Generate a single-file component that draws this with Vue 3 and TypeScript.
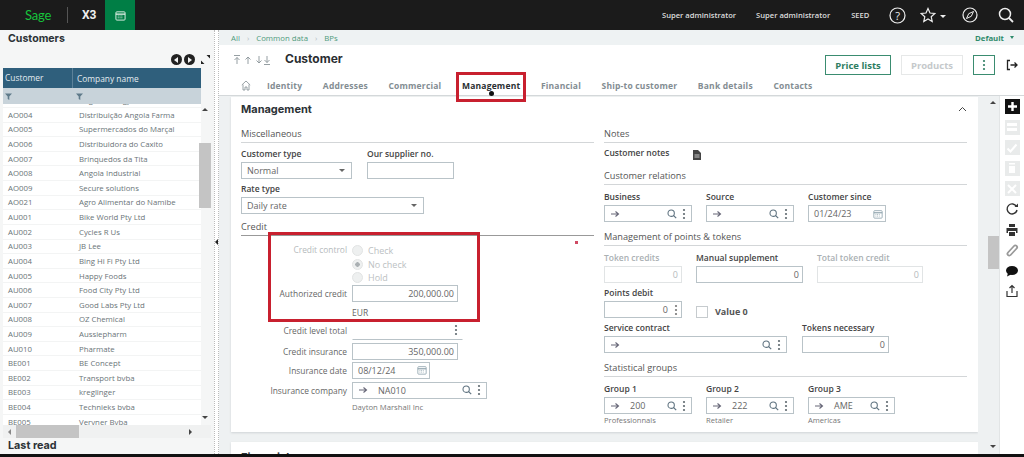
<script setup lang="ts">
const customers: [string, string][] = [
  ['AO003', 'Angola Energy'],
  ['AO004', 'Distribuição Angola Farma'],
  ['AO005', 'Supermercados do Marçal'],
  ['AO006', 'Distribuidora do Caxito'],
  ['AO007', 'Brinquedos da Tita'],
  ['AO008', 'Angola Industrial'],
  ['AO009', 'Secure solutions'],
  ['AO021', 'Agro Alimentar do Namibe'],
  ['AU001', 'Bike World Pty Ltd'],
  ['AU002', 'Cycles R Us'],
  ['AU003', 'JB Lee'],
  ['AU004', 'Bing Hi Fi Pty Ltd'],
  ['AU005', 'Happy Foods'],
  ['AU006', 'Food City Pty Ltd'],
  ['AU007', 'Good Labs Pty Ltd'],
  ['AU008', 'OZ Chemical'],
  ['AU009', 'Aussiepharm'],
  ['AU010', 'Pharmate'],
  ['BE001', 'BE Concept'],
  ['BE002', 'Transport bvba'],
  ['BE003', 'kreglinger'],
  ['BE004', 'Technieks bvba'],
  ['BE005', 'Vervner Bvba'],
]

const tabs = ['Identity', 'Addresses', 'Commercial', 'Management', 'Financial', 'Ship-to customer', 'Bank details', 'Contacts']

const groups = [
  { label: 'Group 1', value: '200', sub: 'Professionnals', width: 88 },
  { label: 'Group 2', value: '222', sub: 'Retailer', width: 88 },
  { label: 'Group 3', value: 'AME', sub: 'Americas', width: 87 },
]

const disabledTools = ['i-save', 'i-check', 'i-trash', 'i-close']
const activeTools = ['i-reload', 'i-print', 'i-clip', 'i-bubble', 'i-upload']
</script>

<template>
  <div class="page">
    <svg class="defs" width="0" height="0" aria-hidden="true">
      <symbol id="i-search" viewBox="0 0 12 12"><circle cx="5" cy="5" r="3.8" fill="none" stroke="currentColor" stroke-width="1.3" /><path d="M8 8l3 3" stroke="currentColor" stroke-width="1.5" /></symbol>
      <symbol id="i-arrow" viewBox="0 0 10 10"><path d="M1 5h7M5.5 2.5L8.5 5l-3 2.5" fill="none" stroke="currentColor" stroke-width="1.1" /></symbol>
      <symbol id="i-dots" viewBox="0 0 4 12"><circle cx="2" cy="2" r="1.1" fill="currentColor" /><circle cx="2" cy="6" r="1.1" fill="currentColor" /><circle cx="2" cy="10" r="1.1" fill="currentColor" /></symbol>
      <symbol id="i-cal" viewBox="0 0 12 12"><rect x="1" y="2" width="10" height="9" rx="1" fill="none" stroke="currentColor" /><path d="M1 4.5h10" stroke="currentColor" stroke-width="1.4" /><path d="M3 6.5h6M3 8.5h6" stroke="currentColor" stroke-dasharray="1 1" /></symbol>
      <symbol id="i-save" viewBox="0 0 14 14"><path d="M2 3h10v3H2zM2 8h10v3H2z" fill="#fff" /></symbol>
      <symbol id="i-check" viewBox="0 0 14 14"><path d="M2.5 7.5l3 3 6-7" fill="none" stroke="#fff" stroke-width="2" /></symbol>
      <symbol id="i-trash" viewBox="0 0 14 14"><path d="M4 2h6v1.5H4zM4 5h6v7H4z" fill="#fff" /></symbol>
      <symbol id="i-close" viewBox="0 0 14 14"><path d="M3 3l8 8M11 3l-8 8" stroke="#fff" stroke-width="2" /></symbol>
      <symbol id="i-reload" viewBox="0 0 14 14"><path d="M11.5 4.5A5 5 0 1 0 12 8" fill="none" stroke="#333" stroke-width="1.4" /><path d="M9.5 5h3.5V1.5z" fill="#333" /></symbol>
      <symbol id="i-print" viewBox="0 0 14 14"><path d="M4 1h6v3H4zM1.5 5h11v5H11V8H3v2H1.5zM4 9h6v4H4z" fill="#333" /></symbol>
      <symbol id="i-clip" viewBox="0 0 14 14"><path d="M3 9.5l6-6.500a1.800 1.800 0 0 1 2.600 2.500l-6 6.500a1.800 1.800 0 0 1-2.600-2.500z" fill="none" stroke="#999" stroke-width="1.800" /></symbol>
      <symbol id="i-bubble" viewBox="0 0 14 14"><ellipse cx="7" cy="6.500" rx="6" ry="4.500" fill="#111" /><path d="M3 9l-1 3.500 4-2z" fill="#111" /></symbol>
      <symbol id="i-upload" viewBox="0 0 14 14"><path d="M2 7v5.500h10V7M7 9V1.500M4.500 4L7 1.500 9.500 4" fill="none" stroke="#333" stroke-width="1.200" /></symbol>
    </svg>

    <header class="topbar">
      <span class="logo">Sage</span>
      <span class="logo-sep"></span>
      <span class="product">X3</span>
      <span class="cal-tab"><svg width="11" height="11"><use href="#i-cal" /></svg></span>
      <span class="top-user first">Super administrator</span>
      <span class="top-user second">Super administrator</span>
      <span class="top-user third">SEED</span>
      <svg class="top-icon help" width="17" height="17" viewBox="0 0 17 17"><circle cx="8.500" cy="8.500" r="7.500" fill="none" stroke="#eee" stroke-width="1.200" /><text x="8.500" y="12.500" text-anchor="middle" class="help-mark">?</text></svg>
      <svg class="top-icon star" width="16" height="16" viewBox="0 0 16 16"><path d="M8 1.500l2 4.500 4.800.5-3.600 3.200 1 4.800L8 12l-4.200 2.500 1-4.800L1.200 6.500 6 6z" fill="none" stroke="#eee" stroke-width="1.200" /></svg>
      <span class="star-caret"></span>
      <svg class="top-icon compass" width="16" height="16" viewBox="0 0 16 16"><circle cx="8" cy="8" r="7" fill="none" stroke="#eee" stroke-width="1.200" /><path d="M11.500 4.500L9.300 9.300 4.500 11.500 6.700 6.700z" fill="none" stroke="#eee" /></svg>
      <svg class="top-icon search" width="16" height="16" viewBox="0 0 16 16"><circle cx="7" cy="7" r="5.500" fill="none" stroke="#eee" stroke-width="1.500" /><path d="M11 11l4 4" stroke="#eee" stroke-width="1.800" /></svg>
    </header>

    <div class="body">
      <aside class="sidebar">
        <h2 class="side-title">Customers</h2>
        <div class="side-nav">
          <span class="round-btn"><i class="tri left"></i></span>
          <span class="round-btn"><i class="tri right"></i></span>
          <svg width="11" height="11" viewBox="0 0 11 11" class="expand"><path d="M6.500 1H10v3.500zM1 6.500V10h3.500z" fill="#222" /></svg>
        </div>
        <div class="grid-wrap">
          <div class="grid">
            <div class="grid-head"><span class="c1">Customer</span><span class="c2">Company name</span></div>
            <div class="grid-filter">
              <span class="c1"><svg width="7" height="7" viewBox="0 0 7 7"><path d="M0 .5h7L4.300 3.500V7L2.700 6V3.500z" fill="#5f7a8a" /></svg></span>
              <span class="c2"><svg width="7" height="7" viewBox="0 0 7 7"><path d="M0 .5h7L4.300 3.500V7L2.700 6V3.500z" fill="#5f7a8a" /></svg></span>
            </div>
            <div class="grid-rows">
              <div v-for="c in customers" :key="c[0]" class="grid-row"><span class="c1">{{ c[0] }}</span><span class="c2">{{ c[1] }}</span></div>
            </div>
          </div>
          <div class="vscroll">
            <i class="tri up"></i>
            <span class="vthumb"></span>
            <i class="tri down"></i>
          </div>
        </div>
        <div class="hscroll">
          <i class="tri sleft"></i>
          <span class="hthumb"></span>
          <i class="tri sright"></i>
        </div>
        <div class="last-read">Last read</div>
      </aside>

      <div class="splitter"><i class="tri split-arrow"></i></div>

      <main class="main">
        <nav class="crumbs">
          <span>All</span><b>›</b><span>Common data</span><b>›</b><span>BPs</span>
          <span class="view">Default <i class="tri view-caret"></i></span>
        </nav>

        <div class="record-head">
          <div class="title-row">
            <svg class="rec-arrows" width="38" height="10" viewBox="0 0 38 10">
              <g fill="none" stroke="#8a9499" stroke-width=".9">
                <path d="M1 .5h6M4 9V2.500M1.500 5L4 2.500 6.500 5" />
                <path d="M15 9V2M12.500 4.500L15 2l2.500 2.500" />
                <path d="M26 1v7M23.500 5.500L26 8l2.500-2.500" />
                <path d="M34 1v6.500M31.500 5L34 7.500 36.500 5M31 9.500h6" />
              </g>
            </svg>
            <h1 class="rec-title">Customer</h1>
            <div class="rec-actions">
              <button class="btn primary">Price lists</button>
              <button class="btn off">Products</button>
              <button class="btn more"><svg width="4" height="12"><use href="#i-dots" /></svg></button>
              <svg class="exit" width="12" height="12" viewBox="0 0 12 12"><path d="M4 1.500H1.500v9H4M4.500 6H11M8.500 3.500L11 6 8.500 8.500" fill="none" stroke="#222" stroke-width="1.300" /></svg>
            </div>
          </div>
          <div class="tabs">
            <svg class="home" width="10" height="11" viewBox="0 0 10 11"><path d="M.8 5L5 1l4.200 4M2 4.500V10h2V7h2v3h2V4.500" fill="none" stroke="#7f8a8f" stroke-width=".8" /></svg>
            <span v-for="t in tabs" :key="t" class="tab" :class="{ active: t === 'Management' }">{{ t }}</span>
          </div>
          <span class="callout tab-callout"></span>
        </div>

        <div class="content-row">
          <div class="content">
            <section class="card">
              <div class="card-head">
                <h2>Management</h2>
                <svg width="9" height="6" viewBox="0 0 9 6"><path d="M1 5l3.500-3.500L8 5" fill="none" stroke="#444" /></svg>
              </div>
              <div class="columns">
                <div class="col left-col">
                  <h3 class="sec first-sec">Miscellaneous</h3>
                  <div class="row">
                    <div class="f">
                      <label>Customer type</label>
                      <div class="inp w111">Normal<i class="tri sel"></i></div>
                    </div>
                    <div class="f">
                      <label>Our supplier no.</label>
                      <div class="inp w87"></div>
                    </div>
                  </div>
                  <div class="f">
                    <label>Rate type</label>
                    <div class="inp w183">Daily rate<i class="tri sel"></i></div>
                  </div>
                  <h3 class="sec dark">Credit</h3>
                  <div class="credit">
                    <div class="cr radios">
                      <span class="cl dim">Credit control</span>
                      <div class="radio-list">
                        <span class="radio"><i></i>Check</span>
                        <span class="radio on"><i></i>No check</span>
                        <span class="radio"><i></i>Hold</span>
                      </div>
                    </div>
                    <div class="cr">
                      <span class="cl">Authorized credit</span>
                      <div class="inp w106 num">200,000.00</div>
                    </div>
                    <div class="cr unit"><span class="cl"></span><span>EUR</span></div>
                    <div class="cr total">
                      <span class="cl">Credit level total</span>
                      <div class="inp w111 flat-top"><svg class="dots" width="4" height="12"><use href="#i-dots" /></svg></div>
                    </div>
                    <div class="cr">
                      <span class="cl">Credit insurance</span>
                      <div class="inp w106 num">350,000.00</div>
                    </div>
                    <div class="cr gap3">
                      <span class="cl">Insurance date</span>
                      <div class="inp w78">08/12/24<svg class="cal" width="10" height="10"><use href="#i-cal" /></svg></div>
                    </div>
                    <div class="cr">
                      <span class="cl">Insurance company</span>
                      <div class="inp w135 look">
                        <svg class="arrow" width="10" height="10"><use href="#i-arrow" /></svg><span class="lv">NA010</span>
                        <svg class="mag" width="10" height="10"><use href="#i-search" /></svg><svg class="dots" width="4" height="12"><use href="#i-dots" /></svg>
                      </div>
                    </div>
                    <div class="cr"><span class="cl"></span><span class="sub">Dayton Marshall Inc</span></div>
                  </div>
                  <span class="red-dot"></span>
                  <span class="callout credit-callout"></span>
                </div>

                <div class="col">
                  <h3 class="sec first-sec">Notes</h3>
                  <div class="notes">
                    <label>Customer notes</label>
                    <svg width="8" height="10" viewBox="0 0 8 10"><path d="M0 0h5l3 3v7H0z" fill="#444" /><path d="M1.500 5h5M1.500 7h5" stroke="#fff" stroke-width=".7" /></svg>
                  </div>
                  <h3 class="sec">Customer relations</h3>
                  <div class="row g14">
                    <div class="f"><label>Business</label>
                      <div class="inp w88 look"><svg class="arrow" width="10" height="10"><use href="#i-arrow" /></svg>
                        <svg class="mag" width="10" height="10"><use href="#i-search" /></svg><svg class="dots" width="4" height="12"><use href="#i-dots" /></svg></div></div>
                    <div class="f"><label>Source</label>
                      <div class="inp w88 look"><svg class="arrow" width="10" height="10"><use href="#i-arrow" /></svg>
                        <svg class="mag" width="10" height="10"><use href="#i-search" /></svg><svg class="dots" width="4" height="12"><use href="#i-dots" /></svg></div></div>
                    <div class="f"><label>Customer since</label>
                      <div class="inp w78">01/24/23<svg class="cal" width="10" height="10"><use href="#i-cal" /></svg></div></div>
                  </div>
                  <h3 class="sec">Management of points &amp; tokens</h3>
                  <div class="row g14">
                    <div class="f"><label class="dim">Token credits</label><div class="inp w78 num off">0</div></div>
                    <div class="f"><label>Manual supplement</label><div class="inp w107 num">0</div></div>
                    <div class="f"><label class="dim">Total token credit</label><div class="inp w106 num off">0</div></div>
                  </div>
                  <div class="row g14">
                    <div class="f"><label>Points debit</label>
                      <div class="inp w78 num with-dots">0<svg class="dots" width="4" height="12"><use href="#i-dots" /></svg></div></div>
                    <div class="check"><i></i>Value 0</div>
                  </div>
                  <div class="row g15">
                    <div class="f"><label>Service contract</label>
                      <div class="inp w183 look"><svg class="arrow" width="10" height="10"><use href="#i-arrow" /></svg>
                        <svg class="mag" width="10" height="10"><use href="#i-search" /></svg><svg class="dots" width="4" height="12"><use href="#i-dots" /></svg></div></div>
                    <div class="f"><label>Tokens necessary</label><div class="inp w87 num">0</div></div>
                  </div>
                  <h3 class="sec">Statistical groups</h3>
                  <div class="row g14">
                    <div v-for="g in groups" :key="g.label" class="f">
                      <label>{{ g.label }}</label>
                      <div class="inp look" :style="{ width: g.width + 'px' }">
                        <svg class="arrow" width="10" height="10"><use href="#i-arrow" /></svg><span class="lv">{{ g.value }}</span>
                        <svg class="mag" width="10" height="10"><use href="#i-search" /></svg><svg class="dots" width="4" height="12"><use href="#i-dots" /></svg>
                      </div>
                      <span class="sub group-sub">{{ g.sub }}</span>
                    </div>
                  </div>
                </div>
              </div>
            </section>
            <section class="card next"><h2>Financial</h2></section>
          </div>
          <div class="main-scroll">
            <i class="tri up"></i>
            <span class="main-thumb"></span>
            <i class="tri down"></i>
          </div>
          <div class="toolbar">
            <span class="tool plus"><svg width="11" height="11" viewBox="0 0 11 11"><path d="M5.500 1v9M1 5.500h9" stroke="#fff" stroke-width="2.400" /></svg></span>
            <span v-for="t in disabledTools" :key="t" class="tool dis"><svg width="14" height="14"><use :href="'#' + t" /></svg></span>
            <span v-for="t in activeTools" :key="t" class="tool"><svg width="14" height="14"><use :href="'#' + t" /></svg></span>
          </div>
        </div>
      </main>
    </div>
    <div class="bottom"></div>
  </div>
</template>

<style>
html, body { margin: 0; background: #fff; }
</style>

<style scoped>
.page {
  width: 1024px;
  height: 457px;
  overflow: hidden;
  display: flex;
  flex-direction: column;
  font-family: "Open Sans", sans-serif;
  color: #555;
  font-size: 9.5px;
}
.defs { position: absolute; }
.bottom { height: 3px; background: #111; flex: none; }
.tri { display: block; width: 0; height: 0; border: 3px solid transparent; }

.topbar {
  height: 30px;
  flex: none;
  background: #1b1b1b;
  display: flex;
  align-items: center;
  color: #eee;
}
.logo { margin-left: 25px; width: 27px; color: #16c43c; font: 400 13px "Lato", sans-serif; letter-spacing: -.2px; }
.logo-sep { width: 1px; height: 16px; background: #555; margin-left: 15px; }
.product { margin-left: 14px; width: 15px; font: 700 12px "Roboto", sans-serif; }
.cal-tab { margin-left: 8px; width: 30px; height: 30px; background: #007e45; display: flex; align-items: center; justify-content: center; color: #e8f4ec; }
.top-user { font-size: 7.6px; font-weight: 600; color: #ddd; white-space: nowrap; }
.top-user.first { margin-left: 527px; }
.top-user.second { margin-left: 20px; }
.top-user.third { margin-left: 21px; }
.help-mark { font: 400 11px "Open Sans", sans-serif; fill: #eee; }
.top-icon { flex: none; }
.help { margin-left: 20px; }
.star { margin-left: 14px; }
.star-caret { width: 0; height: 0; border: 3px solid transparent; border-top-color: #eee; margin: 6px 0 0 4px; }
.compass { margin-left: 16px; }
.search { margin-left: 20px; }

.body { flex: 1; min-height: 0; display: flex; }

.sidebar { width: 214px; flex: none; background: #f5f6f6; display: flex; flex-direction: column; }
.side-title { margin: 0; padding: 2px 0 0 8px; height: 14px; font: 700 10.600px/14px "Inter", sans-serif; color: #2c3236; }
.side-nav { height: 22px; display: flex; align-items: center; gap: 2px; padding: 5px 0 0 171px; box-sizing: border-box; }
.round-btn { width: 11px; height: 11px; flex: none; border-radius: 50%; background: #222; display: flex; align-items: center; }
.tri.left { border-right: 4px solid #f5f6f6; border-left: 0; margin-left: 3px; }
.tri.right { border-left: 4px solid #f5f6f6; border-right: 0; margin-left: 4px; }
.expand { margin-left: 3px; flex: none; }
.grid-wrap { height: 357px; margin-left: 3px; display: flex; }
.grid { width: 198px; flex: none; display: flex; flex-direction: column; background: #fff; }
.grid-head { height: 20px; background: #2f5f7c; color: #e4ecf0; font-size: 8.400px; display: flex; align-items: center; }
.grid-head .c1 { border-right: 1px solid #5b8199; height: 20px; line-height: 20px; }
.grid-filter { height: 16px; background: #c8d3da; display: flex; align-items: center; }
.grid-filter svg { display: block; }
.c1 { width: 67px; flex: none; padding-left: 2px; box-sizing: content-box; }
.c2 { padding-left: 4px; }
.grid-rows { flex: 1; min-height: 0; overflow: hidden; }
.grid-row { height: 14.620px; box-sizing: border-box; border-bottom: 1px solid #f3f4f4; display: flex; align-items: center; font-size: 7.800px; color: #6a7478; }
.grid-row:first-child { margin-top: -10.600px; }
.grid-row .c1 { width: 71px; padding-left: 5px; }
.grid-row .c2 { padding-left: 0; }
.vscroll { width: 12px; flex: none; display: flex; flex-direction: column; align-items: center; margin-left: -2px; padding-top: 40px; box-sizing: border-box; }
.tri.up { border-bottom: 3px solid #444; border-top: 0; }
.tri.down { border-top: 3px solid #444; border-bottom: 0; }
.vscroll .vthumb { width: 12px; height: 65px; background: #c4c4c4; margin-top: 32px; }
.vscroll .down { margin-top: auto; margin-bottom: 6px; }
.hscroll { height: 13px; margin-left: 3px; width: 208px; background: #f0f1f1; display: flex; align-items: center; }
.tri.sleft { border-right: 3px solid #888; border-left: 0; margin-left: 5px; }
.hthumb { width: 63px; height: 13px; background: #c4c4c4; margin-left: 5px; }
.tri.sright { border-left: 3px solid #444; border-right: 0; margin-left: 110px; }
.last-read { padding-left: 8px; font: 700 10.800px/14px "Inter", sans-serif; color: #2c3236; margin-top: 1px; }

.splitter { width: 3px; flex: none; background: #fff; border-left: 1px dotted #bbb; border-right: 1px dotted #bbb; display: flex; align-items: center; }
.split-arrow { border-right: 3px solid #222; border-left: 0; }

.main { flex: 1; min-width: 0; display: flex; flex-direction: column; }
.crumbs { height: 15px; flex: none; background: #eef2f3; display: flex; align-items: center; gap: 7px; padding: 0 10px 0 12px; color: #4f9a7c; font-size: 7.800px; }
.crumbs b { color: #b5bfc3; font-weight: 400; }
.view { margin-left: auto; font-weight: 700; color: #2e8b6b; display: flex; align-items: center; gap: 6px; }
.tri.view-caret { border-top: 3px solid #2e8b6b; border-bottom: 0; border-width: 3px 2px 0; }

.record-head { height: 51px; flex: none; position: relative; background: #fff; border-bottom: 1px solid #d4d8da; box-sizing: border-box; }
.title-row { display: flex; align-items: center; height: 30px; padding-left: 14px; box-sizing: border-box; }
.rec-arrows { flex: none; margin-bottom: 1px; }
.rec-title { margin: 0 0 4px 14px; font: 700 12px "Inter", sans-serif; color: #2a2e31; }
.rec-actions { margin-left: auto; display: flex; align-items: center; padding-top: 10px; }
.btn { height: 20px; box-sizing: border-box; font: 700 9.500px "Open Sans", sans-serif; background: #fff; padding: 0; }
.btn.primary { width: 66px; border: 1.500px solid #3a8c70; color: #2e7d62; }
.btn.off { width: 62px; margin-left: 10px; border: 1px solid #e6e8e8; color: #c5c9cb; }
.btn.more { width: 22px; margin-left: 10px; border: 1.500px solid #3a8c70; color: #2e7d62; display: flex; align-items: center; justify-content: center; }
.exit { margin: 0 6px 0 11px; }
.tabs { display: flex; align-items: center; height: 20px; padding-left: 22px; gap: 20.600px; }
.home { margin-right: -4.600px; }
.tab { font-size: 8.500px; font-weight: 700; letter-spacing: .2px; color: #838d92; white-space: nowrap; position: relative; }
.tab.active { color: #2a2e31; }
.tab.active::after { content: ""; position: absolute; left: 50%; bottom: -5px; width: 5px; height: 5px; margin-left: -2px; border-radius: 50%; background: #111; }
.callout { position: absolute; border: 3px solid #c8202f; box-sizing: border-box; pointer-events: none; }
.tab-callout { left: 237px; top: 27px; width: 70px; height: 30px; }

.content-row { flex: 1; min-height: 0; display: flex; }
.content { width: 759px; flex: none; background: #eef1f2; overflow: hidden; padding: 1px 0 0 12px; box-sizing: border-box; }
.card { width: 747px; background: #fff; box-shadow: 0 1px 2px #cfd4d6; }
.card.next { margin-top: 10px; height: 40px; padding: 8px 0 0 10px; box-sizing: border-box; }
.card h2 { margin: 0; font: 700 11px "Inter", sans-serif; color: #2c3236; }
.card-head { height: 24px; display: flex; align-items: center; justify-content: space-between; padding: 0 11px 0 10px; box-sizing: border-box; }
.columns { display: flex; padding: 6px 11px 0 10px; gap: 10px; height: 305px; }
.col { display: flex; flex-direction: column; }
.col:last-child { width: 363px; }
.left-col { width: 353px; position: relative; }
.sec { margin: 6px 0 4px; height: 16px; box-sizing: border-box; border-bottom: 1px solid #d3d6d8; font-size: 9.200px; font-weight: 400; line-height: 14px; color: #555; flex: none; }
.sec.first-sec { margin: 0 0 3px; }
.sec.dark { border-bottom-color: #999; margin: 4px 0 8px; }
.row { display: flex; gap: 15px; }
.row.g14 { gap: 14px; }
.row.g15 { gap: 15px; }
.f { display: flex; flex-direction: column; margin-bottom: 2px; }
label { font-size: 8.500px; font-weight: 600; line-height: 16px; height: 16px; color: #444; white-space: nowrap; }
label.dim { color: #aab0b3; }
.inp {
  height: 17px;
  flex: none;
  box-sizing: border-box;
  border: 1px solid #b9c3c8;
  background: #fff;
  display: flex;
  align-items: center;
  padding: 0 5px;
  font-size: 9px;
  color: #666;
  white-space: nowrap;
}
.w78 { width: 78px; }
.w87 { width: 87px; }
.w88 { width: 88px; }
.w106 { width: 106px; }
.w107 { width: 107px; }
.w111 { width: 111px; }
.w135 { width: 135px; }
.w183 { width: 183px; }
.tri.sel { border-top: 3px solid #666; border-bottom: 0; margin-left: auto; margin-right: 1px; }
.num { justify-content: flex-end; padding-right: 3px; }
.num.off { border-color: #e1e4e5; color: #b5babc; }
.with-dots .dots { margin-left: 6px; color: #777; }
.cal { margin-left: auto; margin-right: -3px; color: #8fa3ad; }
.look { padding-right: 5px; }
.arrow { color: #667; flex: none; }
.lv { margin-left: 10px; }
.mag { margin-left: auto; color: #5f7380; flex: none; }
.dots { margin-left: 5px; color: #5f6a70; flex: none; }
.flat-top { justify-content: flex-end; border-top-color: transparent; border-left-color: transparent; border-right-color: transparent; padding-right: 4px; height: 19px; }
.credit { display: flex; flex-direction: column; }
.cr { display: flex; align-items: center; gap: 5px; margin-bottom: 2px; }
.cr.gap3 { margin-bottom: 3px; }
.cl { width: 106px; flex: none; text-align: right; font-size: 8.400px; color: #666; white-space: nowrap; }
.cl.dim { color: #b5babc; }
.radios { align-items: flex-start; margin-bottom: 0; }
.radio-list { display: flex; flex-direction: column; }
.radio { height: 13.500px; display: flex; align-items: center; gap: 5px; font-size: 9px; color: #bcc1c3; }
.radio i { width: 11px; height: 11px; border-radius: 50%; background: #eef0f0; border: 1px solid #e2e4e4; box-sizing: border-box; }
.radio.on i { background: radial-gradient(circle, #aab0b3 2px, #eef0f0 2.500px); }
.unit { height: 17px; margin-bottom: 0; font-size: 8.500px; color: #666; }
.total { margin-bottom: 3px; }
.sub { font-size: 7.700px; color: #777; margin-top: 1px; }
.group-sub { margin-top: 1px; font-size: 7.600px; }
.notes { height: 14px; display: flex; align-items: center; gap: 24px; margin-bottom: 3px; }
.notes label { height: 14px; line-height: 14px; }
.notes svg { margin-top: 3px; }
.check { display: flex; align-items: center; gap: 7px; font-size: 9px; font-weight: 700; color: #555; margin-top: 20px; height: 13px; }
.check i { width: 12px; height: 12px; box-sizing: border-box; border: 1px solid #c6cbce; }
.red-dot { position: absolute; left: 334px; top: 114px; width: 3px; height: 3px; background: #cf4a63; }
.credit-callout { left: 27px; top: 105px; width: 212px; height: 90px; }

.main-scroll { width: 22px; flex: none; background: #eef1f2; border-right: 1px solid #e2e5e6; box-sizing: border-box; display: flex; flex-direction: column; align-items: flex-end; padding: 5px 3px 4px 0; position: relative; }
.main-thumb { position: absolute; right: 0; top: 140px; width: 11px; height: 33px; background: #c4c4c4; }
.main-scroll .down { margin-top: auto; margin-bottom: 2px; }
.toolbar { flex: 1; display: flex; flex-direction: column; align-items: center; background: #fff; padding-top: 3px; gap: 5.500px; }
.tool { width: 15px; height: 15px; display: flex; align-items: center; justify-content: center; flex: none; }
.tool.plus { background: #111; }
.tool.dis { background: #e9ebeb; }
</style>
